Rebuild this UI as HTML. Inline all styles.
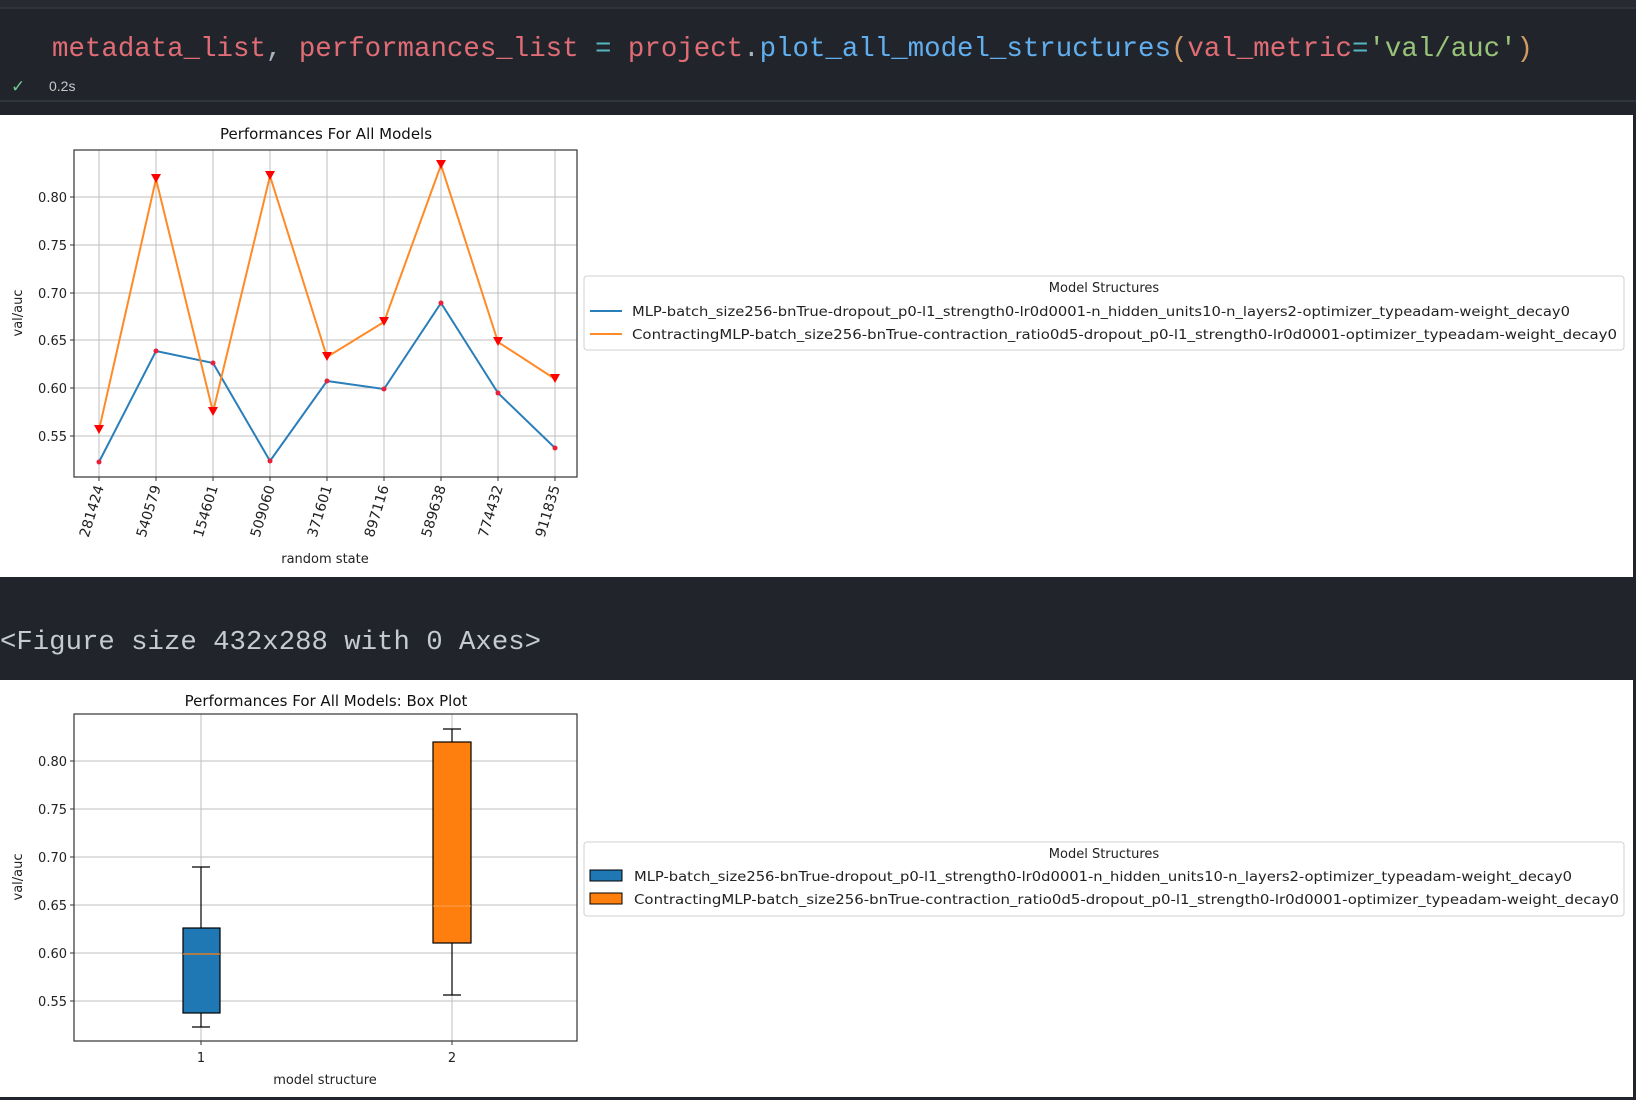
<!DOCTYPE html>
<html><head><meta charset="utf-8"><style>
html,body{margin:0;padding:0;background:#21252b;width:1636px;height:1100px;overflow:hidden}
svg{position:absolute;left:0;top:0}
</style></head><body>
<svg width="1636" height="1100" xmlns="http://www.w3.org/2000/svg" font-family="DejaVu Sans, sans-serif">
<rect x="0" y="0" width="1636" height="1100" fill="#21252b"/>
<rect x="0" y="0" width="1636" height="7" fill="#272b31"/>
<line x1="0" y1="8" x2="1636" y2="8" stroke="#353a42" stroke-width="1.5"/>
<line x1="0" y1="101" x2="1636" y2="101" stroke="#353a42" stroke-width="1.5"/>
<text x="52" y="56" font-family="Liberation Mono, monospace" font-size="27.5" textLength="1481" lengthAdjust="spacingAndGlyphs"><tspan fill="#e06c75">metadata_list</tspan><tspan fill="#abb2bf">, </tspan><tspan fill="#e06c75">performances_list</tspan><tspan fill="#56b6c2"> = </tspan><tspan fill="#e06c75">project</tspan><tspan fill="#abb2bf">.</tspan><tspan fill="#61afef">plot_all_model_structures</tspan><tspan fill="#d19a66">(</tspan><tspan fill="#e06c75">val_metric</tspan><tspan fill="#56b6c2">=</tspan><tspan fill="#98c379">'val/auc'</tspan><tspan fill="#d19a66">)</tspan></text>
<text x="11" y="92" fill="#73c991" font-size="17" font-family="DejaVu Sans">✓</text>
<text x="49" y="91" fill="#c8c8c8" font-size="14" font-family="Liberation Sans">0.2s</text>

<rect x="0" y="115" width="1633" height="462" fill="#fff"/>
<text x="326" y="139" font-size="15" text-anchor="middle" fill="#111">Performances For All Models</text>
<g stroke="#b0b0b0" stroke-width="1" opacity="0.8">
<line x1="99" y1="150" x2="99" y2="477"/><line x1="156" y1="150" x2="156" y2="477"/><line x1="213" y1="150" x2="213" y2="477"/><line x1="270" y1="150" x2="270" y2="477"/><line x1="327" y1="150" x2="327" y2="477"/><line x1="384" y1="150" x2="384" y2="477"/><line x1="441" y1="150" x2="441" y2="477"/><line x1="498" y1="150" x2="498" y2="477"/><line x1="555" y1="150" x2="555" y2="477"/>
<line x1="74" y1="197" x2="577" y2="197"/><line x1="74" y1="245" x2="577" y2="245"/><line x1="74" y1="293" x2="577" y2="293"/><line x1="74" y1="340" x2="577" y2="340"/><line x1="74" y1="388" x2="577" y2="388"/><line x1="74" y1="436" x2="577" y2="436"/>
</g>
<polyline fill="none" stroke="#2a7fba" stroke-width="2" points="99,462 156,351 213,363 270,461 327,381 384,389 441,303 498,393 555,448"/>
<polyline fill="none" stroke="#ff8a26" stroke-width="2" points="99,430 156,179 213,412 270,176 327,357 384,322 441,165 498,342 555,379"/>
<g fill="#e8203a"><circle cx="99" cy="462" r="2.5"/><circle cx="156" cy="351" r="2.5"/><circle cx="213" cy="363" r="2.5"/><circle cx="270" cy="461" r="2.5"/><circle cx="327" cy="381" r="2.5"/><circle cx="384" cy="389" r="2.5"/><circle cx="441" cy="303" r="2.5"/><circle cx="498" cy="393" r="2.5"/><circle cx="555" cy="448" r="2.5"/></g>
<g fill="#f00">
<path d="M94,425h10l-5,9z"/><path d="M151,174h10l-5,9z"/><path d="M208,407h10l-5,9z"/><path d="M265,171h10l-5,9z"/><path d="M322,352h10l-5,9z"/><path d="M379,317h10l-5,9z"/><path d="M436,160h10l-5,9z"/><path d="M493,337h10l-5,9z"/><path d="M550,374h10l-5,9z"/>
</g>
<rect x="74" y="150" width="503" height="327" fill="none" stroke="#333" stroke-width="1.2"/>
<g stroke="#333"><line x1="70" y1="197" x2="74" y2="197"/><line x1="70" y1="245" x2="74" y2="245"/><line x1="70" y1="293" x2="74" y2="293"/><line x1="70" y1="340" x2="74" y2="340"/><line x1="70" y1="388" x2="74" y2="388"/><line x1="70" y1="436" x2="74" y2="436"/>
<line x1="99" y1="477" x2="99" y2="481"/><line x1="156" y1="477" x2="156" y2="481"/><line x1="213" y1="477" x2="213" y2="481"/><line x1="270" y1="477" x2="270" y2="481"/><line x1="327" y1="477" x2="327" y2="481"/><line x1="384" y1="477" x2="384" y2="481"/><line x1="441" y1="477" x2="441" y2="481"/><line x1="498" y1="477" x2="498" y2="481"/><line x1="555" y1="477" x2="555" y2="481"/></g>
<g font-size="13" fill="#222" text-anchor="end">
<text x="67" y="202">0.80</text><text x="67" y="250">0.75</text><text x="67" y="298">0.70</text><text x="67" y="345">0.65</text><text x="67" y="393">0.60</text><text x="67" y="441">0.55</text>
</g>
<text transform="translate(22,313) rotate(-90)" font-size="13" text-anchor="middle" fill="#222">val/auc</text>
<g font-size="14" fill="#222" text-anchor="end">
<text transform="translate(104,487) rotate(-73)">281424</text><text transform="translate(161,487) rotate(-73)">540579</text><text transform="translate(218,487) rotate(-73)">154601</text><text transform="translate(275,487) rotate(-73)">509060</text><text transform="translate(332,487) rotate(-73)">371601</text><text transform="translate(389,487) rotate(-73)">897116</text><text transform="translate(446,487) rotate(-73)">589638</text><text transform="translate(503,487) rotate(-73)">774432</text><text transform="translate(560,487) rotate(-73)">911835</text>
</g>
<text x="325" y="563" font-size="13" text-anchor="middle" fill="#222">random state</text>
<rect x="584" y="276" width="1040" height="74" rx="3" fill="#fff" stroke="#d0d0d0"/>
<text x="1104" y="292" font-size="13" text-anchor="middle" fill="#222">Model Structures</text>
<line x1="590" y1="311" x2="622" y2="311" stroke="#2a7fba" stroke-width="2"/>
<line x1="590" y1="334" x2="622" y2="334" stroke="#ff8a26" stroke-width="2"/>
<text x="632" y="316" font-size="13" fill="#222" textLength="938" lengthAdjust="spacingAndGlyphs">MLP-batch_size256-bnTrue-dropout_p0-l1_strength0-lr0d0001-n_hidden_units10-n_layers2-optimizer_typeadam-weight_decay0</text>
<text x="632" y="339" font-size="13" fill="#222" textLength="985" lengthAdjust="spacingAndGlyphs">ContractingMLP-batch_size256-bnTrue-contraction_ratio0d5-dropout_p0-l1_strength0-lr0d0001-optimizer_typeadam-weight_decay0</text>

<text x="0" y="649" font-family="Liberation Mono, monospace" font-size="27" fill="#c5cad3" textLength="541" lengthAdjust="spacingAndGlyphs">&lt;Figure size 432x288 with 0 Axes&gt;</text>

<rect x="0" y="680" width="1633" height="417" fill="#fff"/>
<text x="326" y="706" font-size="15" text-anchor="middle" fill="#111">Performances For All Models: Box Plot</text>
<g stroke="#b0b0b0" stroke-width="1" opacity="0.8">
<line x1="201" y1="714" x2="201" y2="1041"/><line x1="452" y1="714" x2="452" y2="1041"/>
<line x1="74" y1="761" x2="577" y2="761"/><line x1="74" y1="809" x2="577" y2="809"/><line x1="74" y1="857" x2="577" y2="857"/><line x1="74" y1="905" x2="577" y2="905"/><line x1="74" y1="953" x2="577" y2="953"/><line x1="74" y1="1001" x2="577" y2="1001"/>
</g>
<g stroke="#000" stroke-width="1.2">
<line x1="201" y1="1013" x2="201" y2="1027"/><line x1="192" y1="1027" x2="210" y2="1027"/>
<line x1="201" y1="928" x2="201" y2="867"/><line x1="192" y1="867" x2="210" y2="867"/>
<rect x="183" y="928" width="37" height="85" fill="#1f77b4"/>
<line x1="452" y1="943" x2="452" y2="995"/><line x1="443" y1="995" x2="461" y2="995"/>
<line x1="452" y1="742" x2="452" y2="729"/><line x1="443" y1="729" x2="461" y2="729"/>
<rect x="433" y="742" width="38" height="201" fill="#ff7f0e"/>
</g>
<line x1="183" y1="954" x2="220" y2="954" stroke="#ff7f0e" stroke-width="1.2"/>
<line x1="433" y1="906" x2="471" y2="906" stroke="#ff9f4e" stroke-width="1"/>
<rect x="74" y="714" width="503" height="327" fill="none" stroke="#333" stroke-width="1.2"/>
<g stroke="#333"><line x1="70" y1="761" x2="74" y2="761"/><line x1="70" y1="809" x2="74" y2="809"/><line x1="70" y1="857" x2="74" y2="857"/><line x1="70" y1="905" x2="74" y2="905"/><line x1="70" y1="953" x2="74" y2="953"/><line x1="70" y1="1001" x2="74" y2="1001"/>
<line x1="201" y1="1041" x2="201" y2="1045"/><line x1="452" y1="1041" x2="452" y2="1045"/></g>
<g font-size="13" fill="#222" text-anchor="end">
<text x="67" y="766">0.80</text><text x="67" y="814">0.75</text><text x="67" y="862">0.70</text><text x="67" y="910">0.65</text><text x="67" y="958">0.60</text><text x="67" y="1006">0.55</text>
</g>
<text transform="translate(22,877) rotate(-90)" font-size="13" text-anchor="middle" fill="#222">val/auc</text>
<text x="201" y="1062" font-size="13" text-anchor="middle" fill="#222">1</text>
<text x="452" y="1062" font-size="13" text-anchor="middle" fill="#222">2</text>
<text x="325" y="1084" font-size="13" text-anchor="middle" fill="#222">model structure</text>
<rect x="584" y="842" width="1040" height="74" rx="3" fill="#fff" stroke="#d0d0d0"/>
<text x="1104" y="858" font-size="13" text-anchor="middle" fill="#222">Model Structures</text>
<rect x="590" y="870" width="32" height="11" fill="#1f77b4" stroke="#000"/>
<rect x="590" y="893" width="32" height="11" fill="#ff7f0e" stroke="#000"/>
<text x="634" y="881" font-size="13" fill="#222" textLength="938" lengthAdjust="spacingAndGlyphs">MLP-batch_size256-bnTrue-dropout_p0-l1_strength0-lr0d0001-n_hidden_units10-n_layers2-optimizer_typeadam-weight_decay0</text>
<text x="634" y="904" font-size="13" fill="#222" textLength="985" lengthAdjust="spacingAndGlyphs">ContractingMLP-batch_size256-bnTrue-contraction_ratio0d5-dropout_p0-l1_strength0-lr0d0001-optimizer_typeadam-weight_decay0</text>
</svg>
</body></html>
